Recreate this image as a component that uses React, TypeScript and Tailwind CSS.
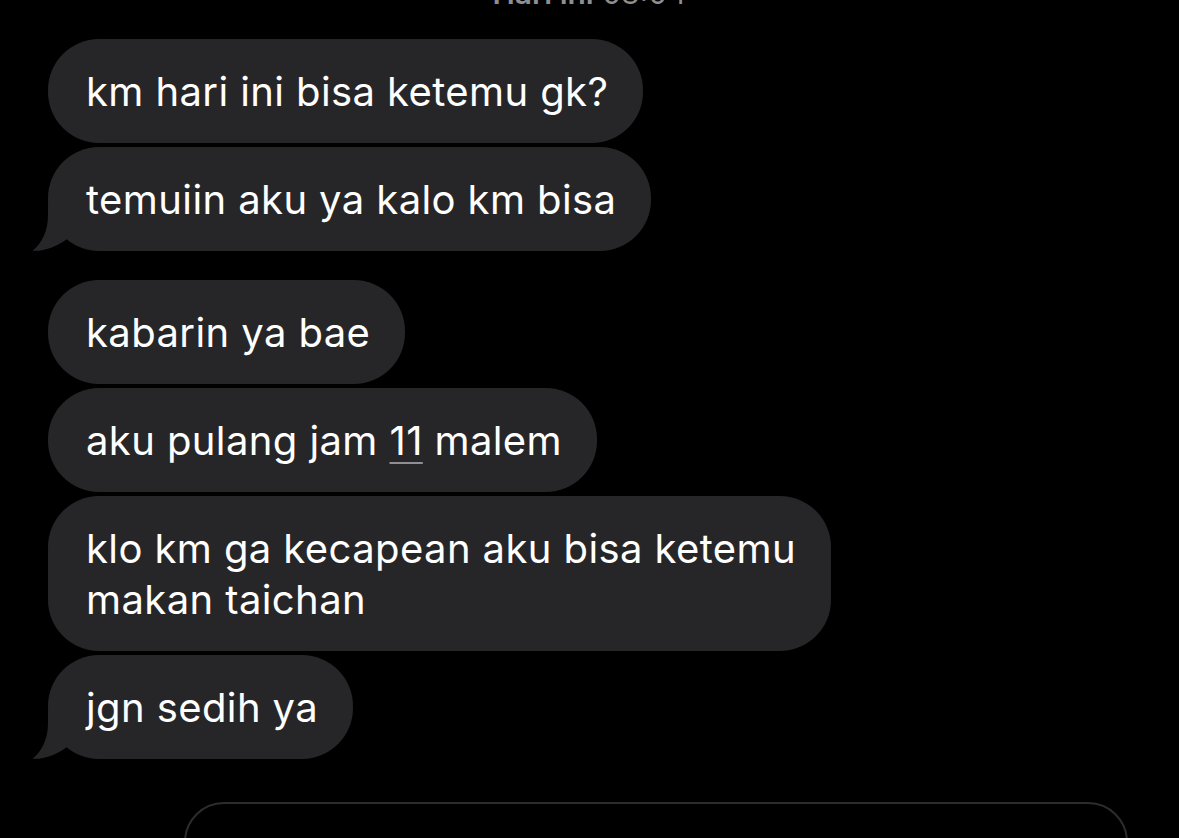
import React from "react";

function Tail() {
  return (
    <svg
      className="absolute left-[-16px] bottom-0"
      width="50"
      height="50"
      viewBox="0 0 50 50"
      aria-hidden
    >
      <path
        d="M16 2 L16 14 C16 30 10 42 0.5 49.8 C 12 50.5 24 46 35 38 L 40 20 L 30 2 Z"
        fill="#262629"
      />
    </svg>
  );
}

function Bubble({ children, tail }: { children: React.ReactNode; tail?: boolean }) {
  return (
    <div className="relative w-fit max-w-[820px] rounded-[51px] bg-[#262629] pl-[38px] pr-[35px] py-[26.5px] text-[40px] leading-[51px] tracking-[0.4px] text-white">
      {tail && <Tail />}
      <span className="relative">{children}</span>
    </div>
  );
}

export default function App() {
  return (
    <div
      className="h-[838px] w-[1179px] overflow-hidden bg-black"
      style={{ fontFamily: "Inter, 'Noto Sans', sans-serif" }}
    >
      <div className="mt-[-24px] text-center text-[30px] leading-[35px] text-[#8e8e93]">
        <span className="font-semibold">Hari ini</span> 08:04
      </div>
      <div className="mt-[28px] flex flex-col gap-[4px] pl-[48px]">
        <Bubble>km hari ini bisa ketemu gk?</Bubble>
        <Bubble tail>temuiin aku ya kalo km bisa</Bubble>
        <div className="h-[21px]" />
        <Bubble>kabarin ya bae</Bubble>
        <Bubble>
          aku pulang jam{" "}
          <span className="underline decoration-[#8e8e93] decoration-2 underline-offset-[7px]">11</span>{" "}
          malem
        </Bubble>
        <Bubble>
          klo km ga kecapean aku bisa ketemu
          <br />
          makan taichan
        </Bubble>
        <Bubble tail>jgn sedih ya</Bubble>
      </div>
      <div className="mt-[43px] ml-[184px] h-[80px] w-[944px] rounded-[40px] border-2 border-[#2c2c2e]" />
    </div>
  );
}
